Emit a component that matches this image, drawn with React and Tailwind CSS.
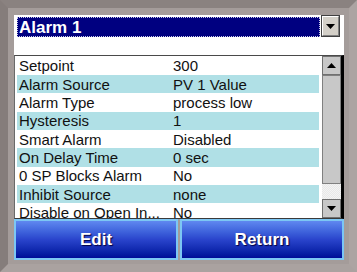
import React from "react";

const rows = [
  ["Setpoint", "300"],
  ["Alarm Source", "PV 1 Value"],
  ["Alarm Type", "process low"],
  ["Hysteresis", "1"],
  ["Smart Alarm", "Disabled"],
  ["On Delay Time", "0 sec"],
  ["0 SP Blocks Alarm", "No"],
  ["Inhibit Source", "none"],
  ["Disable on Open In...", "No"],
];

function Arrow({ up }) {
  return (
    <svg width="9" height="5" viewBox="0 0 9 5">
      {up ? <polygon points="0,5 9,5 4.5,0" fill="#000" /> : <polygon points="0,0 9,0 4.5,5" fill="#000" />}
    </svg>
  );
}

export default function App() {
  return (
    <div className="w-[357px] h-[272px] box-border border-[8px] border-t-[#8a8280] border-l-[#857d7b] border-r-[#aca4a2] border-b-[#aaa2a0] bg-[#a49c9a] font-['Liberation_Sans',Arial,sans-serif] overflow-hidden">
      <div className="flex flex-col pt-[7px] pl-[6px] pr-[5px]">
        {/* combo */}
        <div className="h-[40px] bg-white flex flex-col">
          <div className="flex items-start h-[22px]">
            <div className="ml-[3px] mt-[2px] w-[303px] h-[20px] bg-[#000080] border border-dotted border-[#c8c8e8] flex items-center pl-[1px]">
              <span className="text-white font-bold text-[17px] leading-none">Alarm 1</span>
            </div>
            <div className="ml-[1px] w-[19px] h-[22px] border border-[#404040] bg-[#d4d0c8] flex items-center justify-center">
              <div className="w-full h-full border-t border-l border-white border-r border-b border-r-[#808080] border-b-[#808080] flex items-center justify-center">
                <Arrow />
              </div>
            </div>
          </div>
        </div>
        {/* list */}
        <div className="h-[164px] bg-white border-t border-b border-l border-t-[#4a4a4a] border-b-[#3a3a3a] border-l-[#6a6a6a] border-r-[3px] border-r-black flex">
          <div className="ml-[2px] w-[302px] pt-[0.7px] overflow-hidden">
            {rows.map(([k, v], i) => (
              <div
                key={k}
                className={`h-[18.33px] flex items-center text-[15px] leading-none text-[#111] whitespace-nowrap ${i % 2 === 1 ? "bg-[#b0e0e6]" : "bg-white"}`}
              >
                <span className="pl-[2px] w-[156px] shrink-0">{k}</span>
                <span>{v}</span>
              </div>
            ))}
          </div>
          <div className="ml-[3px] w-[19px] flex flex-col bg-[#e4e4e4]">
            <div className="h-[19px] bg-[#c8c8c8] border border-[#707070] flex items-center justify-center">
              <Arrow up />
            </div>
            <div className="h-[109px] bg-[#c8c8c8] border border-[#808080]"></div>
            <div className="flex-1 bg-[repeating-conic-gradient(#e8e8e8_0_25%,#f4f4f4_0_50%)] bg-[length:2px_2px]"></div>
            <div className="h-[19px] bg-[#c8c8c8] border border-[#707070] flex items-center justify-center">
              <Arrow />
            </div>
          </div>
        </div>
        {/* buttons */}
        <div className="grid grid-cols-2 gap-[2px] h-[41px]">
          {["Edit", "Return"].map((t) => (
            <div
              key={t}
              className="border-2 border-[#7cc6f4] bg-linear-to-b from-[#6088f0] via-[#2a44cc] to-[#000a98] flex items-center justify-center"
            >
              <span className="text-white font-bold text-[17px] [text-shadow:1px_1px_1px_#000040]">{t}</span>
            </div>
          ))}
        </div>
      </div>
    </div>
  );
}
